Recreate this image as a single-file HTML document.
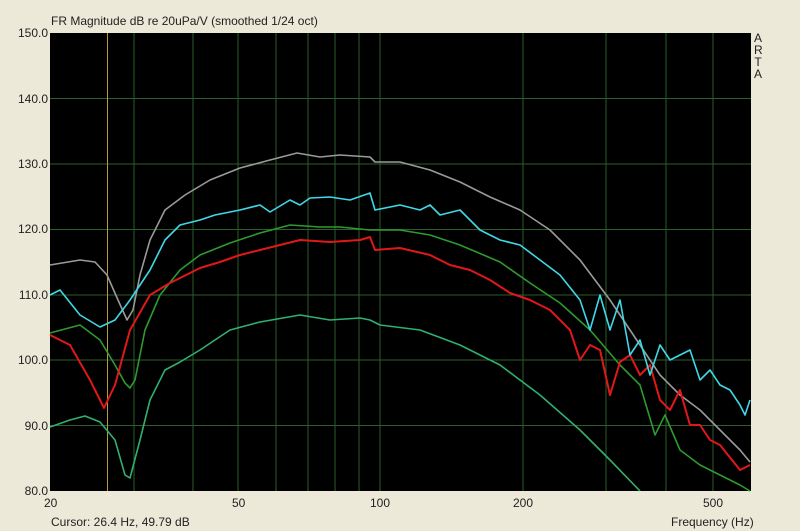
<!DOCTYPE html>
<html><head><style>
body{margin:0;width:800px;height:531px;background:#ece9d8;font-family:"Liberation Sans",sans-serif;position:relative;overflow:hidden}
.t{position:absolute;font-size:12px;color:#222;white-space:nowrap}
.yl{position:absolute;right:752px;font-size:12px;color:#222}
</style></head><body>
<div class="t" style="left:51px;top:14px">FR Magnitude dB re 20uPa/V (smoothed 1/24 oct)</div>
<div class="yl" style="top:26px">150.0</div>
<div class="yl" style="top:92px">140.0</div>
<div class="yl" style="top:157px">130.0</div>
<div class="yl" style="top:222px">120.0</div>
<div class="yl" style="top:288px">110.0</div>
<div class="yl" style="top:353px">100.0</div>
<div class="yl" style="top:419px">90.0</div>
<div class="yl" style="top:484px">80.0</div>
<div class="t" style="left:44px;top:496px">20</div>
<div class="t" style="left:232px;top:496px">50</div>
<div class="t" style="left:370px;top:496px">100</div>
<div class="t" style="left:513px;top:496px">200</div>
<div class="t" style="left:703px;top:496px">500</div>
<div class="t" style="left:51px;top:515px">Cursor: 26.4 Hz, 49.79 dB</div>
<div class="t" style="left:671px;top:515px">Frequency (Hz)</div>
<div class="t" style="left:754px;top:32px;line-height:12px;width:8px;text-align:center">A<br>R<br>T<br>A</div>
<svg style="position:absolute;left:0;top:0" width="800" height="531">
<rect x="50" y="33" width="701" height="458" fill="#000"/>
<g stroke="#2a5e2a" stroke-width="1">
<line x1="50" x2="751" y1="98.5" y2="98.5"/><line x1="50" x2="751" y1="164" y2="164"/><line x1="50" x2="751" y1="229.5" y2="229.5"/><line x1="50" x2="751" y1="295" y2="295"/><line x1="50" x2="751" y1="360" y2="360"/><line x1="50" x2="751" y1="425.5" y2="425.5"/>
<line x1="134" x2="134" y1="33" y2="491"/><line x1="193" x2="193" y1="33" y2="491"/><line x1="238" x2="238" y1="33" y2="491"/><line x1="276" x2="276" y1="33" y2="491"/><line x1="308" x2="308" y1="33" y2="491"/><line x1="335" x2="335" y1="33" y2="491"/><line x1="359" x2="359" y1="33" y2="491"/><line x1="380" x2="380" y1="33" y2="491"/><line x1="523" x2="523" y1="33" y2="491"/><line x1="606" x2="606" y1="33" y2="491"/><line x1="666" x2="666" y1="33" y2="491"/><line x1="713" x2="713" y1="33" y2="491"/>
</g>
<line x1="107.5" x2="107.5" y1="33" y2="491" stroke="#b89a40"/>
<g fill="none" stroke-width="1.6" stroke-linejoin="round">
<polyline stroke="#9a9a9a" points="50,265 80,260 95,262 107,275 118,300 127,320 133,310 140,275 150,240 165,210 185,195 210,180 240,168 270,160 297,153 320,157 340,155 370,157 375,162 400,162 430,170 460,182 490,197 520,210 550,230 580,260 610,300 640,345 660,375 680,395 700,410 720,430 740,450 750,462"/>
<polyline stroke="#2e9a2e" points="50,333 80,325 100,340 115,365 125,383 130,388 135,380 145,330 160,295 180,270 200,255 230,243 260,233 290,225 320,227 340,227 370,230 400,230 430,235 460,245 500,262 530,283 560,303 590,330 620,365 640,385 655,435 665,415 680,450 700,465 720,475 740,485 750,491"/>
<polyline stroke="#e01818" stroke-width="2" points="50,335 70,345 90,380 104,408 115,385 130,330 150,295 170,283 200,268 220,262 240,255 260,250 280,245 300,240 330,242 360,240 370,237 375,250 400,248 430,255 450,265 470,270 490,280 510,293 530,300 550,310 570,330 580,360 590,345 600,350 610,395 620,362 630,355 640,375 650,365 660,400 670,410 680,390 690,425 700,425 710,440 720,445 740,470 750,465"/>
<polyline stroke="#40d8e8" points="50,295 60,290 80,315 100,327 115,320 130,300 150,270 165,240 180,225 200,220 215,215 240,210 260,205 270,212 290,200 300,205 310,198 330,197 350,200 370,193 375,210 400,205 420,210 430,205 440,215 460,210 480,230 500,240 520,245 540,260 560,275 580,300 590,330 600,295 610,330 620,300 630,355 640,340 650,375 660,345 670,360 690,350 700,380 710,370 720,385 730,390 740,405 745,415 750,400"/>
<polyline stroke="#30b070" points="50,427 70,420 85,416 100,422 115,440 125,475 130,478 140,440 150,400 165,370 180,362 200,350 230,330 260,322 300,315 330,320 360,318 370,320 380,325 420,330 460,345 500,365 540,395 580,430 610,460 640,491"/>
</g>
</svg>
</body></html>
